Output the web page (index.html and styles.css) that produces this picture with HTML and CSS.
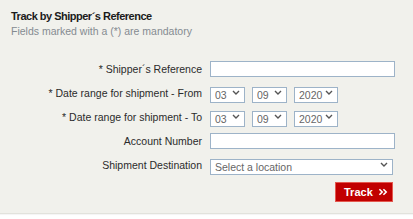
FILE: index.html
```html
<!DOCTYPE html>
<html lang="en">
<head>
  <meta charset="UTF-8" />
  <title>Track by Shipper´s Reference</title>
  <link rel="stylesheet" href="styles.css">
</head>
<body>

  <section class="panel">
    <h1>Track by Shipper´s Reference</h1>
    <p class="nota">Fields marked with a (*) are mandatory</p>

    <form class="formulario">
      <label for="ref">* Shipper´s Reference</label>
      <div class="campo"><input type="text" id="ref" class="texto" /></div>

      <label>* Date range for shipment - From</label>
      <div class="campo fechas">
        <span class="sel dia"><select><option>03</option></select><svg viewBox="0 0 8 5"><path d="M1 1l3 3 3-3" /></svg></span>
        <span class="sel dia"><select><option>09</option></select><svg viewBox="0 0 8 5"><path d="M1 1l3 3 3-3" /></svg></span>
        <span class="sel anio"><select><option>2020</option></select><svg viewBox="0 0 8 5"><path d="M1 1l3 3 3-3" /></svg></span>
      </div>

      <label>* Date range for shipment - To</label>
      <div class="campo fechas">
        <span class="sel dia"><select><option>03</option></select><svg viewBox="0 0 8 5"><path d="M1 1l3 3 3-3" /></svg></span>
        <span class="sel dia"><select><option>09</option></select><svg viewBox="0 0 8 5"><path d="M1 1l3 3 3-3" /></svg></span>
        <span class="sel anio"><select><option>2020</option></select><svg viewBox="0 0 8 5"><path d="M1 1l3 3 3-3" /></svg></span>
      </div>

      <label for="cuenta">Account Number</label>
      <div class="campo"><input type="text" id="cuenta" class="texto" /></div>

      <label>Shipment Destination</label>
      <div class="campo">
        <span class="sel destino"><select><option>Select a location</option></select><svg viewBox="0 0 8 5"><path d="M1 1l3 3 3-3" /></svg></span>
      </div>

      <div class="acciones">
        <button type="button" class="boton">Track <svg viewBox="0 0 12 10"><path d="M1.5 1.5l3.5 3.5-3.5 3.5M6.5 1.5l3.5 3.5-3.5 3.5" /></svg></button>
      </div>
    </form>
  </section>

</body>
</html>
```

FILE: styles.css
```css
* { box-sizing: border-box; margin: 0; padding: 0; }

body {
  font-family: "Liberation Sans", Arial, sans-serif;
  background: #fff;
  color: #333;
  width: 413px;
  height: 219px;
  overflow: hidden;
}

.panel {
  background: #f1f1ec;
  height: 214px;
  padding: 9px 11px 0 11px;
  border-bottom: 1px solid #e2e2dc;
  box-shadow: 0 1px 1px rgba(0,0,0,0.04);
}

.panel h1 {
  font-size: 11px;
  line-height: 14px;
  font-weight: bold;
  letter-spacing: -0.5px;
  color: #1b1b1b;
}

.nota {
  font-size: 10.5px;
  line-height: 14px;
  color: #858b91;
  margin-top: 1px;
}

.formulario {
  display: grid;
  grid-template-columns: 191px 1fr;
  column-gap: 8px;
  row-gap: 8px;
  margin-top: 23px;
}

.formulario label {
  font-size: 10.5px;
  line-height: 16px;
  text-align: right;
  color: #2b2b2b;
}

.campo {
  display: flex;
  align-items: center;
  height: 16px;
}

.fechas { gap: 7px; }

.texto {
  width: 185px;
  height: 16px;
  border: 1px solid #9db3c8;
  background: #fff;
}

.sel {
  position: relative;
  display: block;
  height: 16px;
}

.sel select {
  appearance: none;
  -webkit-appearance: none;
  width: 100%;
  height: 16px;
  border: 1px solid #9db3c8;
  border-radius: 0;
  background: #fff;
  font-family: inherit;
  font-size: 10.5px;
  color: #666;
  padding: 0 0 0 4px;
  line-height: 14px;
}

.sel svg {
  position: absolute;
  right: 5px;
  top: 5px;
  width: 8px;
  height: 5px;
  pointer-events: none;
}

.sel svg path {
  fill: none;
  stroke: #555;
  stroke-width: 1.4;
}

.dia { width: 35px; }
.anio { width: 44px; }
.destino { width: 183px; }

.acciones {
  grid-column: 1 / 3;
  display: flex;
  justify-content: flex-end;
  padding-right: 9px;
  margin-top: 1px;
}

.boton {
  display: flex;
  align-items: center;
  gap: 5px;
  width: 58px;
  height: 20px;
  padding-left: 8px;
  background: #c10000;
  border: 1px solid #e4584f;
  color: #fff;
  font-family: inherit;
  font-size: 11px;
  font-weight: bold;
  cursor: pointer;
}

.boton svg {
  width: 10px;
  height: 8px;
}

.boton svg path {
  fill: none;
  stroke: #fff;
  stroke-width: 2;
}
```
